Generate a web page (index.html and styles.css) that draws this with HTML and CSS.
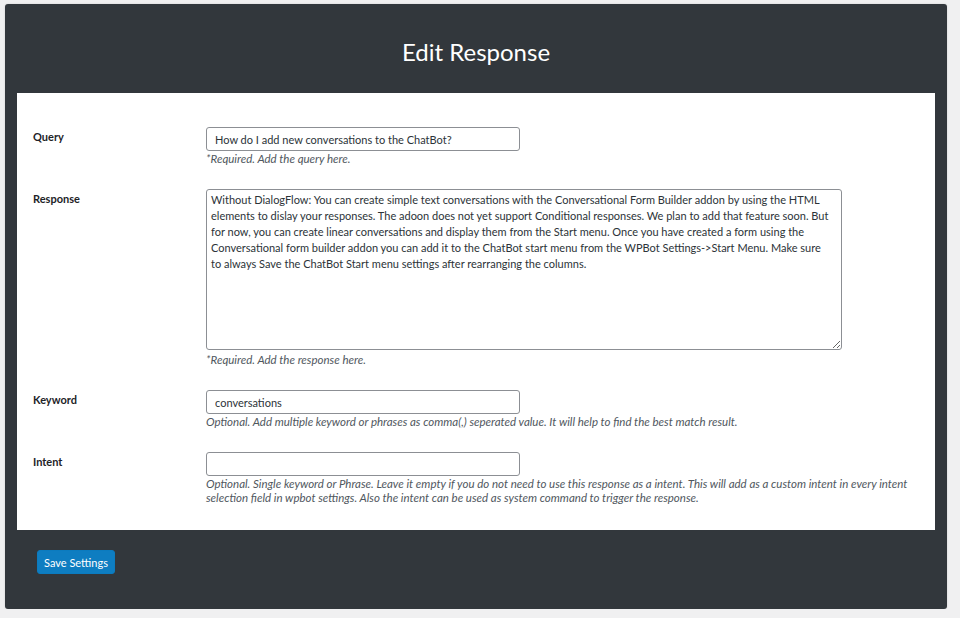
FILE: index.html
```html
<!DOCTYPE html>
<html lang="en">
<head>
  <meta charset="UTF-8" />
  <meta name="viewport" content="width=device-width, initial-scale=1.0" />
  <title>Edit Response</title>
  <link rel="stylesheet" href="styles.css">
</head>
<body>
  <div class="panel">
    <div class="panel-head">
      <h1 class="panel-title">Edit Response</h1>
    </div>
    <form class="card" onsubmit="return false">
      <div class="field">
        <label class="field-label" for="query">Query</label>
        <div class="field-body">
          <input class="text-input" id="query" type="text" value="How do I add new conversations to the ChatBot?">
          <p class="help">*Required. Add the query here.</p>
        </div>
      </div>
      <div class="field">
        <label class="field-label" for="response">Response</label>
        <div class="field-body">
          <textarea class="text-area" id="response">Without DialogFlow: You can create simple text conversations with the Conversational Form Builder addon by using the HTML elements to dislay your responses. The adoon does not yet support Conditional responses. We plan to add that feature soon. But for now, you can create linear conversations and display them from the Start menu. Once you have created a form using the Conversational form builder addon you can add it to the ChatBot start menu from the WPBot Settings-&gt;Start Menu. Make sure to always Save the ChatBot Start menu settings after rearranging the columns.</textarea>
          <p class="help">*Required. Add the response here.</p>
        </div>
      </div>
      <div class="field">
        <label class="field-label" for="keyword">Keyword</label>
        <div class="field-body">
          <input class="text-input" id="keyword" type="text" value="conversations">
          <p class="help">Optional. Add multiple keyword or phrases as comma(,) seperated value. It will help to find the best match result.</p>
        </div>
      </div>
      <div class="field">
        <label class="field-label" for="intent">Intent</label>
        <div class="field-body">
          <input class="text-input" id="intent" type="text" value="">
          <p class="help">Optional. Single keyword or Phrase. Leave it empty if you do not need to use this response as a intent. This will add as a custom intent in every intent selection field in wpbot settings. Also the intent can be used as system command to trigger the response.</p>
        </div>
      </div>
    </form>
    <div class="panel-foot">
      <button class="btn-primary" type="button">Save Settings</button>
    </div>
  </div>
</body>
</html>
```

FILE: styles.css
```css
body {
  margin: 0;
  background: #f0f0f1;
  font-family: 'Lato', 'Open Sans', sans-serif;
  color: #2c3338;
}
.panel {
  width: 942px;
  height: 605px;
  margin: 4px 0 0 5px;
  background: #32373c;
  border-radius: 3px;
  box-shadow: 0 0 2px rgba(0, 0, 0, 0.15);
  overflow: hidden;
}
.panel-head {
  height: 89px;
  display: flex;
  align-items: center;
  justify-content: center;
}
.panel-title {
  margin: 6px 0 0;
  color: #fff;
  font-size: 24px;
  font-weight: 400;
}
.card {
  margin: 0 12px;
  height: 437px;
  box-sizing: border-box;
  background: #fff;
  padding: 34px 16px 0;
}
.field {
  display: grid;
  grid-template-columns: 173px 1fr;
  margin-bottom: 23px;
}
.field-label {
  padding-top: 3px;
  font-size: 11px;
  line-height: 14px;
  font-weight: 700;
  color: #1d2327;
}
.text-input {
  display: block;
  box-sizing: border-box;
  width: 314px;
  height: 24px;
  margin: 0 0 1px;
  padding: 0 8px;
  border: 1px solid #8c8f94;
  border-radius: 3px;
  font-family: inherit;
  font-size: 11px;
  color: #2c3338;
}
.text-area {
  display: block;
  box-sizing: border-box;
  width: 636px;
  height: 161px;
  margin: 0 0 3px;
  padding: 2px 9px 3px 4px;
  border: 1px solid #8c8f94;
  border-radius: 3px;
  font-family: inherit;
  font-size: 11px;
  line-height: 16px;
  color: #2c3338;
  resize: vertical;
}
.help {
  margin: 0;
  font-size: 11.5px;
  line-height: 14px;
  font-style: italic;
  color: #50575e;
}
.panel-foot {
  padding: 20px 32px;
}
.btn-primary {
  height: 24px;
  padding: 0 6px;
  border: 1px solid #0b7bbf;
  border-radius: 3px;
  background: #0e7dc1;
  color: #fff;
  font-family: inherit;
  font-size: 11px;
  cursor: pointer;
}
```
